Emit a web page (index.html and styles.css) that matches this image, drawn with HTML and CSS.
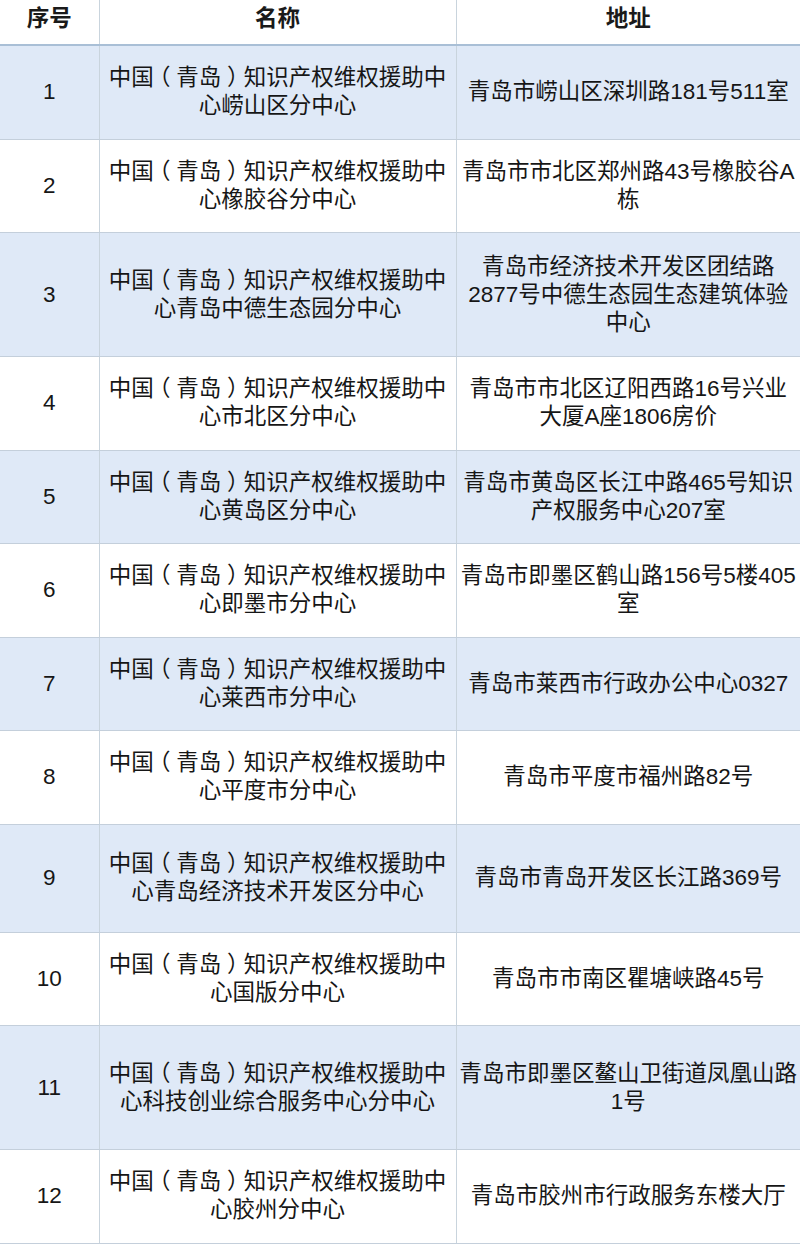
FILE: index.html
```html
<!DOCTYPE html>
<html lang="zh-CN">
<head>
<meta charset="utf-8">
<title>知识产权维权援助分中心</title>
<link rel="stylesheet" href="styles.css">
</head>
<body>
<table class="grid">
  <colgroup>
    <col class="c-no">
    <col class="c-name">
    <col class="c-addr">
  </colgroup>
  <thead>
    <tr class="head">
      <th>序号</th>
      <th>名称</th>
      <th>地址</th>
    </tr>
  </thead>
  <tbody>
    <tr class="odd h2">
      <td>1</td>
      <td>中国<span class="br">（</span>青岛<span class="br">）</span>知识产权维权援助中<br>心崂山区分中心</td>
      <td>青岛市崂山区深圳路181号511室</td>
    </tr>
    <tr class="even h2">
      <td>2</td>
      <td>中国<span class="br">（</span>青岛<span class="br">）</span>知识产权维权援助中<br>心橡胶谷分中心</td>
      <td>青岛市市北区郑州路43号橡胶谷A<br>栋</td>
    </tr>
    <tr class="odd h3">
      <td>3</td>
      <td>中国<span class="br">（</span>青岛<span class="br">）</span>知识产权维权援助中<br>心青岛中德生态园分中心</td>
      <td>青岛市经济技术开发区团结路<br>2877号中德生态园生态建筑体验<br>中心</td>
    </tr>
    <tr class="even h2">
      <td>4</td>
      <td>中国<span class="br">（</span>青岛<span class="br">）</span>知识产权维权援助中<br>心市北区分中心</td>
      <td>青岛市市北区辽阳西路16号兴业<br>大厦A座1806房价</td>
    </tr>
    <tr class="odd h2">
      <td>5</td>
      <td>中国<span class="br">（</span>青岛<span class="br">）</span>知识产权维权援助中<br>心黄岛区分中心</td>
      <td>青岛市黄岛区长江中路465号知识<br>产权服务中心207室</td>
    </tr>
    <tr class="even h2">
      <td>6</td>
      <td>中国<span class="br">（</span>青岛<span class="br">）</span>知识产权维权援助中<br>心即墨市分中心</td>
      <td>青岛市即墨区鹤山路156号5楼405<br>室</td>
    </tr>
    <tr class="odd h2">
      <td>7</td>
      <td>中国<span class="br">（</span>青岛<span class="br">）</span>知识产权维权援助中<br>心莱西市分中心</td>
      <td>青岛市莱西市行政办公中心0327</td>
    </tr>
    <tr class="even h2">
      <td>8</td>
      <td>中国<span class="br">（</span>青岛<span class="br">）</span>知识产权维权援助中<br>心平度市分中心</td>
      <td>青岛市平度市福州路82号</td>
    </tr>
    <tr class="odd h9">
      <td>9</td>
      <td>中国<span class="br">（</span>青岛<span class="br">）</span>知识产权维权援助中<br>心青岛经济技术开发区分中心</td>
      <td>青岛市青岛开发区长江路369号</td>
    </tr>
    <tr class="even h2">
      <td>10</td>
      <td>中国<span class="br">（</span>青岛<span class="br">）</span>知识产权维权援助中<br>心国版分中心</td>
      <td>青岛市市南区瞿塘峡路45号</td>
    </tr>
    <tr class="odd h3">
      <td>11</td>
      <td>中国<span class="br">（</span>青岛<span class="br">）</span>知识产权维权援助中<br>心科技创业综合服务中心分中心</td>
      <td>青岛市即墨区鳌山卫街道凤凰山路<br>1号</td>
    </tr>
    <tr class="even h2">
      <td>12</td>
      <td>中国<span class="br">（</span>青岛<span class="br">）</span>知识产权维权援助中<br>心胶州分中心</td>
      <td>青岛市胶州市行政服务东楼大厅</td>
    </tr>
  </tbody>
</table>
</body>
</html>
```

FILE: styles.css
```css
html, body {
  margin: 0;
  padding: 0;
  background: #ffffff;
}

body {
  font-family: "Liberation Sans", "Noto Sans CJK SC", sans-serif;
  color: #161616;
  width: 800px;
  overflow: hidden;
}

.grid {
  width: 800px;
  table-layout: fixed;
  border-collapse: collapse;
  font-size: 22.5px;
  line-height: 28px;
}

.c-no { width: 99px; }
.c-name { width: 357px; }
.c-addr { width: 344px; }

.grid th,
.grid td {
  padding: 0 2px;
  text-align: center;
  vertical-align: middle;
  white-space: nowrap;
  border-left: 1px solid #c9d4dd;
  border-right: 1px solid #c9d4dd;
  border-bottom: 1px solid #c4cfdb;
}

.grid th:first-child,
.grid td:first-child {
  border-left: none;
}

.grid th:last-child,
.grid td:last-child {
  border-right: none;
}

/* half-width bracket glyph, centred in a full em cell */
.br {
  font-feature-settings: "halt" 1;
  padding: 0 0.25em;
}

.head th {
  height: 37px;
  padding-bottom: 7px;
  padding-top: 0;
  font-weight: bold;
  color: #1a1a1a;
  background: #ffffff;
  border-bottom: 2px solid #a9bfd6;
}

.odd td {
  background: #dfe9f7;
}

.even td {
  background: #ffffff;
}

.h2 td { height: 92.5px; }
.h3 td { height: 123px; }
.h9 td { height: 107px; }
```
